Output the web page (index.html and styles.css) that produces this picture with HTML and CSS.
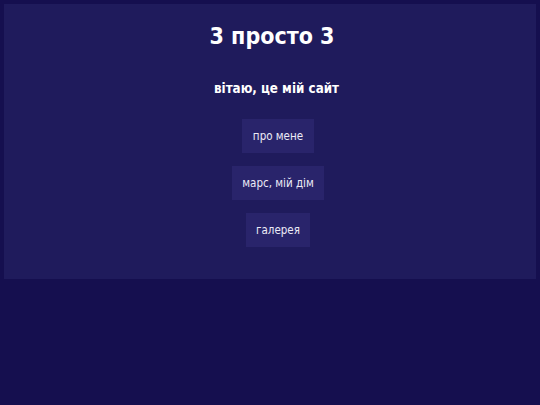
FILE: index.html
```html
<!DOCTYPE html>
<html lang="uk">
<head>
<meta charset="utf-8">
<title>3 просто 3</title>
<link rel="stylesheet" href="styles.css">
</head>
<body>
<div class="panel">
  <h1 class="title">3 просто 3</h1>
  <h2 class="greeting">вітаю, це мій сайт</h2>
  <nav class="menu">
    <a class="btn" href="#">про мене</a>
    <a class="btn" href="#">марс, мій дім</a>
    <a class="btn" href="#">галерея</a>
  </nav>
</div>
</body>
</html>
```

FILE: styles.css
```css
html, body {
  margin: 0;
  padding: 0;
  background: #150f4f;
  font-family: "DejaVu Sans Condensed", "DejaVu Sans", Verdana, sans-serif;
  color: #ffffff;
}
body {
  padding: 4px;
}
.panel {
  background: #1f1b5c;
  height: 275px;
  box-sizing: border-box;
  padding-top: 18px;
  display: flex;
  flex-direction: column;
  align-items: center;
}
.title {
  margin: 0;
  padding-left: 4px;
  font-size: 23px;
  line-height: 28px;
  font-weight: bold;
}
.greeting {
  margin: 30px 0 0 0;
  padding-left: 13px;
  font-size: 13.3px;
  line-height: 18px;
  font-weight: bold;
}
.menu {
  margin-top: 21px;
  padding-left: 16px;
  display: flex;
  flex-direction: column;
  align-items: center;
  gap: 13px;
}
.btn {
  display: block;
  background: #29246b;
  color: #ecebf7;
  text-decoration: none;
  font-size: 11.5px;
  line-height: 14px;
  padding: 10px 10.5px;
}
```
